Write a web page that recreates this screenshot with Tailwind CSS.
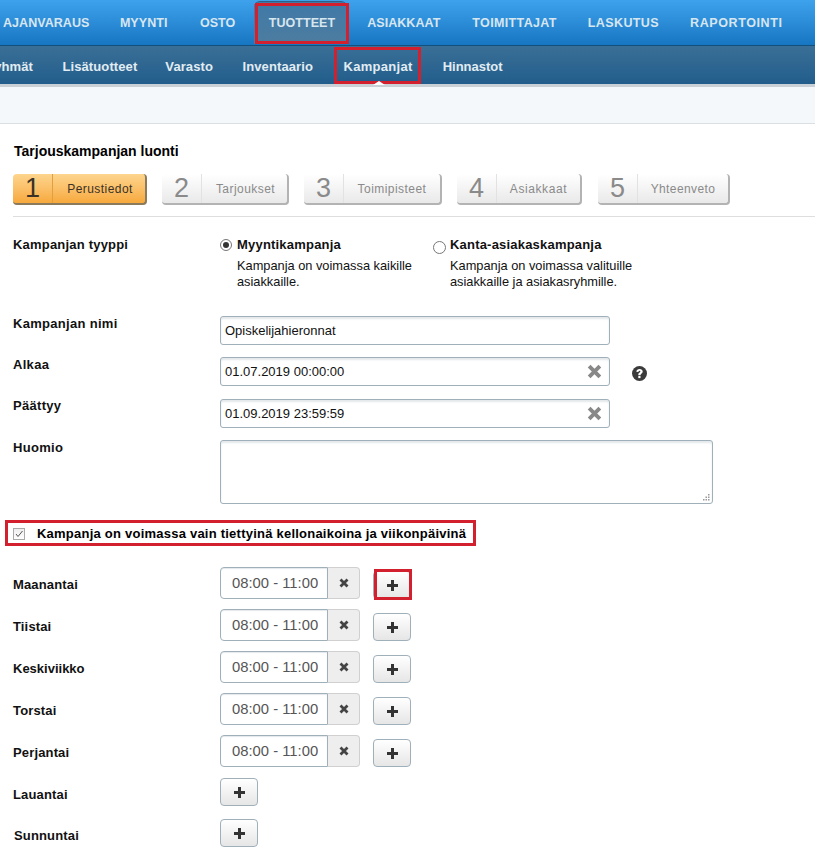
<!doctype html>
<html lang="fi">
<head>
<meta charset="utf-8">
<script src="https://cdn.jsdelivr.net/npm/@tailwindcss/browser@4"></script>
</head>
<body class="bg-white font-['Liberation_Sans',Arial,sans-serif] text-[13px] text-[#111] overflow-hidden">
<div class="relative w-[815px] h-[864px] overflow-hidden">
  <nav class="h-[46px] flex items-center pl-[3px] pt-[1px] gap-[32px] bg-gradient-to-b from-[#3ea2ec] to-[#1676c2] border-b border-[#14507e] text-[12.5px] font-bold tracking-[0.05px] text-[#d8e6f0]">
    <span>AJANVARAUS</span><span class="-ml-[1.5px]">MYYNTI</span><span class="ml-[0.5px]">OSTO</span>
    <span class="relative z-0 ml-[1.5px] before:absolute before:-z-10 before:content-[''] before:-left-[15px] before:-right-[12px] before:-top-[13px] before:-bottom-[12px] before:rounded-t-md before:border-t before:border-[#2f5f86] before:bg-gradient-to-b before:from-[#3f7aa8] before:to-[#4d7c9f]">TUOTTEET</span>
    <span>ASIAKKAAT</span><span class="tracking-[0.35px]">TOIMITTAJAT</span><span class="-ml-[1px] tracking-[0.4px]">LASKUTUS</span><span class="-ml-[1px] tracking-[0.6px]">RAPORTOINTI</span>
  </nav>
  <nav class="relative h-[38px] flex items-center pt-[3px] -ml-[11px] gap-[29.5px] bg-gradient-to-b from-[#3a7097] to-[#215d8b] text-[13px] font-bold tracking-[0.1px] text-[#e2ecf3] w-[830px]">
    <span>ryhmät</span><span>Lisätuotteet</span><span class="-ml-[1.5px]">Varasto</span><span>Inventaario</span><span class="ml-[1px] tracking-[0.3px]">Kampanjat</span><span class="ml-[0.5px] tracking-[0px]">Hinnastot</span>
  </nav>
  <div class="h-[3px] bg-[#c9d1d6]"></div>
  <div class="h-[37px] bg-[#f5f8fb] border-b border-[#dcdfe2]"></div>

  <main class="pl-[13px]">
    <h1 class="mt-[19px] ml-px text-[14px] leading-[17px] font-bold text-black">Tarjouskampanjan luonti</h1>
    <ol class="mt-[14px] flex gap-[15px] h-[31px]">
      <li class="w-[134px] flex items-stretch rounded-[4px] bg-gradient-to-b from-[#fdd58d] to-[#f7a93b] border-b-2 border-r-2 border-[#8b7a5c] text-[#3a3226]">
        <span class="w-[40px] flex items-center justify-center text-[27px] border-r border-[#e0a040]">1</span>
        <span class="flex-1 pl-[2px] flex items-center justify-center text-[12px] tracking-[0.45px]">Perustiedot</span>
      </li>
      <li class="w-[127px] flex items-stretch rounded-[4px] bg-gradient-to-b from-white to-[#e9e9e9] border-b-2 border-r-2 border-[#b3b3b3] text-[#8a8a8a]">
        <span class="w-[40px] flex items-center justify-center text-[27px] border-r border-[#e2e2e2]">2</span>
        <span class="flex-1 pl-[2px] flex items-center justify-center text-[12px] tracking-[0.45px]">Tarjoukset</span>
      </li>
      <li class="w-[138px] flex items-stretch rounded-[4px] bg-gradient-to-b from-white to-[#e9e9e9] border-b-2 border-r-2 border-[#b3b3b3] text-[#8a8a8a]">
        <span class="w-[40px] flex items-center justify-center text-[27px] border-r border-[#e2e2e2]">3</span>
        <span class="flex-1 flex items-center justify-center text-[12px] tracking-[0.45px]">Toimipisteet</span>
      </li>
      <li class="w-[125px] flex items-stretch rounded-[4px] bg-gradient-to-b from-white to-[#e9e9e9] border-b-2 border-r-2 border-[#b3b3b3] text-[#8a8a8a]">
        <span class="w-[40px] flex items-center justify-center text-[27px] border-r border-[#e2e2e2]">4</span>
        <span class="flex-1 flex items-center justify-center text-[12px] tracking-[0.6px]">Asiakkaat</span>
      </li>
      <li class="ml-px w-[132px] flex items-stretch rounded-[4px] bg-gradient-to-b from-white to-[#e9e9e9] border-b-2 border-r-2 border-[#b3b3b3] text-[#8a8a8a]">
        <span class="w-[40px] flex items-center justify-center text-[27px] border-r border-[#e2e2e2]">5</span>
        <span class="flex-1 flex items-center justify-center text-[12px] tracking-[0.4px]">Yhteenveto</span>
      </li>
    </ol>
    <div class="mt-[11px] h-px bg-[#dedede]"></div>

    <section class="mt-[20px] flex h-[60px]">
      <div class="w-[207px] font-bold leading-[16px] tracking-[0.2px]">Kampanjan tyyppi</div>
      <div class="w-[213px] flex gap-[5px]">
        <span class="mt-[2px] w-[12px] h-[12px] rounded-full border border-[#777] bg-white flex items-center justify-center shrink-0"><span class="w-[6px] h-[6px] rounded-full bg-[#333]"></span></span>
        <div class="text-[12.8px] leading-[16px]"><div class="font-bold text-[13px] tracking-[0.2px] mb-[5px]">Myyntikampanja</div>Kampanja on voimassa kaikille<br>asiakkaille.</div>
      </div>
      <div class="flex gap-[4px]">
        <span class="mt-[4px] w-[13px] h-[13px] rounded-full border border-[#777] bg-white shrink-0"></span>
        <div class="text-[12.8px] leading-[16px]"><div class="font-bold text-[13px] tracking-[0.2px] mb-[5px]">Kanta-asiakaskampanja</div>Kampanja on voimassa valituille<br>asiakkaille ja asiakasryhmille.</div>
      </div>
    </section>

    <section class="mt-[19px] flex h-[29px]">
      <label class="w-[207px] pt-px font-bold leading-[14px] tracking-[0.3px]">Kampanjan nimi</label>
      <div class="w-[390px] h-[29px] rounded-[3px] border border-[#9fb0ba] shadow-[inset_0_2px_2px_#e4e8ea] flex items-center px-[4px] text-[13px]">Opiskelijahieronnat</div>
    </section>
    <section class="mt-[12px] flex h-[29px]">
      <label class="w-[207px] pt-px font-bold leading-[14px] tracking-[0.3px]">Alkaa</label>
      <div class="w-[390px] h-[29px] rounded-[3px] border border-[#9fb0ba] shadow-[inset_0_2px_2px_#e4e8ea] flex items-center justify-between pl-[4px] pr-[7px] text-[13px]"><span>01.07.2019 00:00:00</span>
        <svg class="w-[15px] h-[15px] text-[#888]" viewBox="0 0 14 14" fill="none" stroke="currentColor" stroke-width="3.6"><path d="M2 2l10 10M12 2L2 12"/></svg></div>
      <svg class="ml-[22px] mt-[9px] w-[15px] h-[15px]" viewBox="0 0 15 15"><circle cx="7.5" cy="7.5" r="7.5" fill="#3b3b3b"/><path d="M4.300 5.700c.2-1.800 1.500-2.800 3.300-2.800 1.800 0 3.100 1 3.100 2.500 0 2.100-2.200 2-2.200 3.800H6.300c0-2.600 2.100-2.600 2.100-3.600 0-.5-.4-.8-.9-.8-.6 0-1 .4-1.100 1.100z" fill="#fff"/><rect x="6.300" y="10" width="2.200" height="2.100" fill="#fff"/></svg>
    </section>
    <section class="mt-[13px] flex h-[29px]">
      <label class="w-[207px] font-bold leading-[14px] tracking-[0.3px]">Päättyy</label>
      <div class="w-[390px] h-[29px] rounded-[3px] border border-[#9fb0ba] shadow-[inset_0_2px_2px_#e4e8ea] flex items-center justify-between pl-[4px] pr-[7px] text-[13px]"><span>01.09.2019 23:59:59</span>
        <svg class="w-[15px] h-[15px] text-[#888]" viewBox="0 0 14 14" fill="none" stroke="currentColor" stroke-width="3.600"><path d="M2 2l10 10M12 2L2 12"/></svg></div>
    </section>
    <section class="mt-[12px] flex h-[64px]">
      <label class="w-[207px] pt-px font-bold leading-[14px] tracking-[0.3px]">Huomio</label>
      <div class="relative w-[493px] h-[64px] rounded-[3px] border border-[#9fb0ba] shadow-[inset_0_2px_2px_#e4e8ea]">
        <svg class="absolute right-[1px] bottom-[1px] w-[9px] h-[9px]" viewBox="0 0 9 9" fill="#9a9a9a"><rect x="6" y="1" width="1.500" height="1.500"/><rect x="3.500" y="3.500" width="1.500" height="1.500"/><rect x="6" y="3.500" width="1.500" height="1.500"/><rect x="1" y="6" width="1.500" height="1.500"/><rect x="3.500" y="6" width="1.500" height="1.500"/><rect x="6" y="6" width="1.500" height="1.500"/></svg>
      </div>
    </section>

    <section class="mt-[20px] flex items-center h-[20px]">
      <span class="w-[12px] h-[12px] border border-[#aaa] bg-gradient-to-b from-[#eee] to-white flex items-center justify-center"><svg class="w-[10px] h-[10px]" viewBox="0 0 10 10" fill="none" stroke="#555" stroke-width="1"><path d="M2 5l2 2.500L8.500 2"/></svg></span>
      <span class="ml-[12px] font-bold text-[13px] tracking-[0.23px] text-black">Kampanja on voimassa vain tiettyinä kellonaikoina ja viikonpäivinä</span>
    </section>

    <div class="mt-[23px] flex flex-col gap-[10px]">
      <div class="flex h-[32px] items-center">
        <label class="w-[207px] mt-[3px] font-bold tracking-[0.15px]">Maanantai</label>
        <div class="flex w-[140px] h-[32px]"><span class="w-[108px] pl-[11px] pt-px rounded-l-[4px] border border-[#9fb0ba] shadow-[inset_0_1px_1px_#e4e8ea] flex items-center text-[14.8px] text-[#555]">08:00 - 11:00</span><span class="flex-1 rounded-r-[4px] border border-l-0 border-[#d0d0d0] bg-[#eeeeee] flex items-center justify-center"><svg class="w-[10px] h-[10px]" viewBox="0 0 10 10" stroke="#444" stroke-width="2.800" fill="none"><path d="M1.500 1.500l7 7M8.500 1.500l-7 7"/></svg></span></div>
        <button class="ml-[13px] mt-[4px] w-[38px] h-[28px] rounded-[4px] border border-[#9fb0ba] bg-gradient-to-b from-white to-[#e6e6e6] flex items-center justify-center"><svg class="w-[11px] h-[11px]" viewBox="0 0 11 11" fill="#333"><path d="M4 0h3v4h4v3H7v4H4V7H0V4h4z"/></svg></button>
      </div>
      <div class="flex h-[32px] items-center">
        <label class="w-[207px] mt-[3px] font-bold tracking-[0.15px]">Tiistai</label>
        <div class="flex w-[140px] h-[32px]"><span class="w-[108px] pl-[11px] pt-px rounded-l-[4px] border border-[#9fb0ba] shadow-[inset_0_1px_1px_#e4e8ea] flex items-center text-[14.8px] text-[#555]">08:00 - 11:00</span><span class="flex-1 rounded-r-[4px] border border-l-0 border-[#d0d0d0] bg-[#eeeeee] flex items-center justify-center"><svg class="w-[10px] h-[10px]" viewBox="0 0 10 10" stroke="#444" stroke-width="2.800" fill="none"><path d="M1.500 1.500l7 7M8.500 1.500l-7 7"/></svg></span></div>
        <button class="ml-[13px] mt-[4px] w-[38px] h-[28px] rounded-[4px] border border-[#9fb0ba] bg-gradient-to-b from-white to-[#e6e6e6] flex items-center justify-center"><svg class="w-[11px] h-[11px]" viewBox="0 0 11 11" fill="#333"><path d="M4 0h3v4h4v3H7v4H4V7H0V4h4z"/></svg></button>
      </div>
      <div class="flex h-[32px] items-center">
        <label class="w-[207px] mt-[3px] font-bold tracking-[0px]">Keskiviikko</label>
        <div class="flex w-[140px] h-[32px]"><span class="w-[108px] pl-[11px] pt-px rounded-l-[4px] border border-[#9fb0ba] shadow-[inset_0_1px_1px_#e4e8ea] flex items-center text-[14.8px] text-[#555]">08:00 - 11:00</span><span class="flex-1 rounded-r-[4px] border border-l-0 border-[#d0d0d0] bg-[#eeeeee] flex items-center justify-center"><svg class="w-[10px] h-[10px]" viewBox="0 0 10 10" stroke="#444" stroke-width="2.800" fill="none"><path d="M1.500 1.500l7 7M8.500 1.500l-7 7"/></svg></span></div>
        <button class="ml-[13px] mt-[4px] w-[38px] h-[28px] rounded-[4px] border border-[#9fb0ba] bg-gradient-to-b from-white to-[#e6e6e6] flex items-center justify-center"><svg class="w-[11px] h-[11px]" viewBox="0 0 11 11" fill="#333"><path d="M4 0h3v4h4v3H7v4H4V7H0V4h4z"/></svg></button>
      </div>
      <div class="flex h-[32px] items-center">
        <label class="w-[207px] mt-[3px] font-bold tracking-[0.15px]">Torstai</label>
        <div class="flex w-[140px] h-[32px]"><span class="w-[108px] pl-[11px] pt-px rounded-l-[4px] border border-[#9fb0ba] shadow-[inset_0_1px_1px_#e4e8ea] flex items-center text-[14.8px] text-[#555]">08:00 - 11:00</span><span class="flex-1 rounded-r-[4px] border border-l-0 border-[#d0d0d0] bg-[#eeeeee] flex items-center justify-center"><svg class="w-[10px] h-[10px]" viewBox="0 0 10 10" stroke="#444" stroke-width="2.800" fill="none"><path d="M1.500 1.500l7 7M8.500 1.500l-7 7"/></svg></span></div>
        <button class="ml-[13px] mt-[4px] w-[38px] h-[28px] rounded-[4px] border border-[#9fb0ba] bg-gradient-to-b from-white to-[#e6e6e6] flex items-center justify-center"><svg class="w-[11px] h-[11px]" viewBox="0 0 11 11" fill="#333"><path d="M4 0h3v4h4v3H7v4H4V7H0V4h4z"/></svg></button>
      </div>
      <div class="flex h-[32px] items-center">
        <label class="w-[207px] mt-[3px] font-bold tracking-[0.15px]">Perjantai</label>
        <div class="flex w-[140px] h-[32px]"><span class="w-[108px] pl-[11px] pt-px rounded-l-[4px] border border-[#9fb0ba] shadow-[inset_0_1px_1px_#e4e8ea] flex items-center text-[14.8px] text-[#555]">08:00 - 11:00</span><span class="flex-1 rounded-r-[4px] border border-l-0 border-[#d0d0d0] bg-[#eeeeee] flex items-center justify-center"><svg class="w-[10px] h-[10px]" viewBox="0 0 10 10" stroke="#444" stroke-width="2.800" fill="none"><path d="M1.500 1.500l7 7M8.500 1.500l-7 7"/></svg></span></div>
        <button class="ml-[13px] mt-[4px] w-[38px] h-[28px] rounded-[4px] border border-[#9fb0ba] bg-gradient-to-b from-white to-[#e6e6e6] flex items-center justify-center"><svg class="w-[11px] h-[11px]" viewBox="0 0 11 11" fill="#333"><path d="M4 0h3v4h4v3H7v4H4V7H0V4h4z"/></svg></button>
      </div>
      <div class="flex h-[32px] items-center">
        <label class="w-[207px] mt-[3px] font-bold tracking-[0.15px]">Lauantai</label>
        <button class="-mt-[2px] w-[38px] h-[28px] rounded-[4px] border border-[#9fb0ba] bg-gradient-to-b from-white to-[#e6e6e6] flex items-center justify-center"><svg class="w-[11px] h-[11px]" viewBox="0 0 11 11" fill="#333"><path d="M4 0h3v4h4v3H7v4H4V7H0V4h4z"/></svg></button>
      </div>
      <div class="-mt-[1px] flex h-[32px] items-center">
        <label class="w-[207px] mt-[3px] pl-px font-bold tracking-[0.15px]">Sunnuntai</label>
        <button class="-mt-[2px] w-[38px] h-[28px] rounded-[4px] border border-[#9fb0ba] bg-gradient-to-b from-white to-[#e6e6e6] flex items-center justify-center"><svg class="w-[11px] h-[11px]" viewBox="0 0 11 11" fill="#333"><path d="M4 0h3v4h4v3H7v4H4V7H0V4h4z"/></svg></button>
      </div>
    </div>
  </main>

  <div class="absolute left-[255px] top-[3px] w-[94px] h-[41px] border-[3px] border-[#d2202f]"></div>
  <div class="absolute left-[334px] top-[47px] w-[87px] h-[37px] border-[3px] border-[#d2202f]"></div>
  <div class="absolute left-[373px] top-[81px] w-0 h-0 border-x-[6px] border-x-transparent border-b-[4px] border-b-white"></div>
  <div class="absolute left-[5px] top-[520px] w-[471px] h-[26px] border-[3px] border-[#d2202f]"></div>
  <div class="absolute left-[374px] top-[569px] w-[38px] h-[31px] border-[3px] border-[#d2202f]"></div>
</div>
</body>
</html>
